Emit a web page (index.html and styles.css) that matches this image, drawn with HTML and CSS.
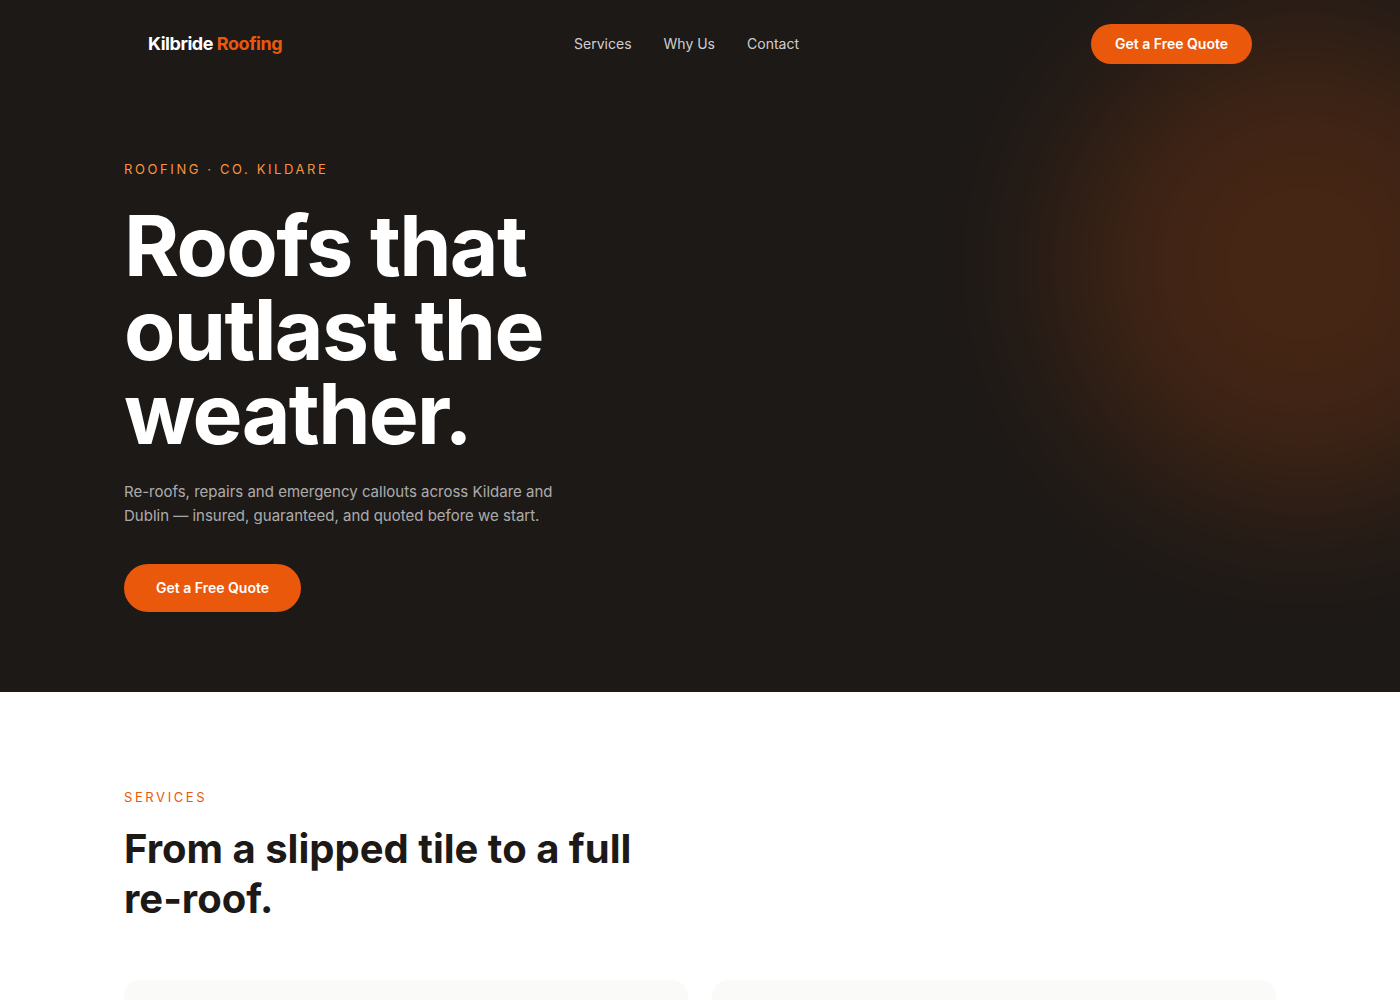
FILE: index.html
```
<!DOCTYPE html>
<html lang="en-IE">
<head>
    <meta charset="utf-8">
    <meta name="viewport" content="width=device-width, initial-scale=1">
    <title>Kilbride Roofing</title>
    <link rel="stylesheet" href="styles.css">
</head>
<body>
    <div class="hero">
        <div class="glow"></div>

        <header class="container navbar">
            <a class="logo" href="#">Kilbride <span>Roofing</span></a>
            <nav>
                <a href="#services">Services</a>
                <a href="#why">Why Us</a>
                <a href="#contact">Contact</a>
            </nav>
            <a class="btn" href="#contact">Get a Free Quote</a>
        </header>

        <section class="container intro">
            <p class="eyebrow">Roofing · Co. Kildare</p>
            <h1>Roofs that outlast the weather.</h1>
            <p class="lead">Re-roofs, repairs and emergency callouts across Kildare and Dublin — insured, guaranteed, and quoted before we start.</p>
            <a class="btn btn-large" href="#contact">Get a Free Quote</a>
        </section>
    </div>

    <section id="services" class="container services">
        <p class="eyebrow">Services</p>
        <h2>From a slipped tile to a full re-roof.</h2>
        <div class="cards">
            <article class="card"></article>
            <article class="card"></article>
        </div>
    </section>
</body>
</html>
```
FILE: styles.css
```
* {
    box-sizing: border-box;
    margin: 0;
    padding: 0;
}

body {
    font-family: Inter, "Liberation Sans", sans-serif;
    font-size: 14px;
    line-height: 20px;
    color: #1c1917;
    background-color: white;
}

a {
    color: inherit;
    text-decoration: none;
}

.container {
    max-width: 1152px;
    margin: 0 auto;
}

/* hero */
.hero {
    position: relative;
    overflow: hidden;
    color: white;
    background-color: #1c1917;
}

.glow {
    position: absolute;
    top: 24px;
    right: -144px;
    width: 480px;
    height: 480px;
    border-radius: 50%;
    background-color: #ea580c;
    opacity: 0.2;
    filter: blur(80px);
}

.navbar {
    position: relative;
    display: flex;
    align-items: center;
    justify-content: space-between;
    padding: 24px;
}

.logo {
    font-size: 18px;
    font-weight: 700;
    letter-spacing: -0.025em;
}

.logo span { color: #ea580c }

nav {
    display: flex;
    gap: 32px;
    color: rgba(255, 255, 255, 0.8);
}

.btn {
    display: inline-block;
    padding: 10px 24px;
    border-radius: 24px;
    font-weight: 600;
    color: white;
    background-color: #ea580c;
}

.btn:hover { background-color: #c2410c }

.btn-large { padding: 14px 32px }

.intro {
    position: relative;
    padding: 72px 0 80px;
}

.eyebrow {
    font-size: 13px;
    line-height: 18px;
    letter-spacing: 0.2em;
    text-transform: uppercase;
    color: #ea580c;
}

.intro .eyebrow { color: #fb923c }

h1 {
    max-width: 512px;
    margin: 26px 0 24px;
    font-size: 84px;
    line-height: 84px;
    font-weight: 700;
    letter-spacing: -0.02em;
}

.lead {
    max-width: 448px;
    margin-bottom: 36px;
    font-size: 15px;
    line-height: 24px;
    color: rgba(255, 255, 255, 0.65);
}

/* services */
.services { padding: 96px 0 }

h2 {
    max-width: 560px;
    margin: 18px 0 56px;
    font-size: 40px;
    line-height: 50px;
    font-weight: 700;
}

.cards {
    display: grid;
    grid-template-columns: 1fr 1fr;
    gap: 24px;
}

.card {
    min-height: 240px;
    border-radius: 16px;
    background-color: #fafaf9;
}

@media (max-width: 1200px) {
    .intro, .services {
        padding-left: 24px;
        padding-right: 24px;
    }
}

@media (max-width: 640px) {
    nav { display: none }
    h1 { font-size: 48px; line-height: 48px }
    .cards { grid-template-columns: 1fr }
}
```
